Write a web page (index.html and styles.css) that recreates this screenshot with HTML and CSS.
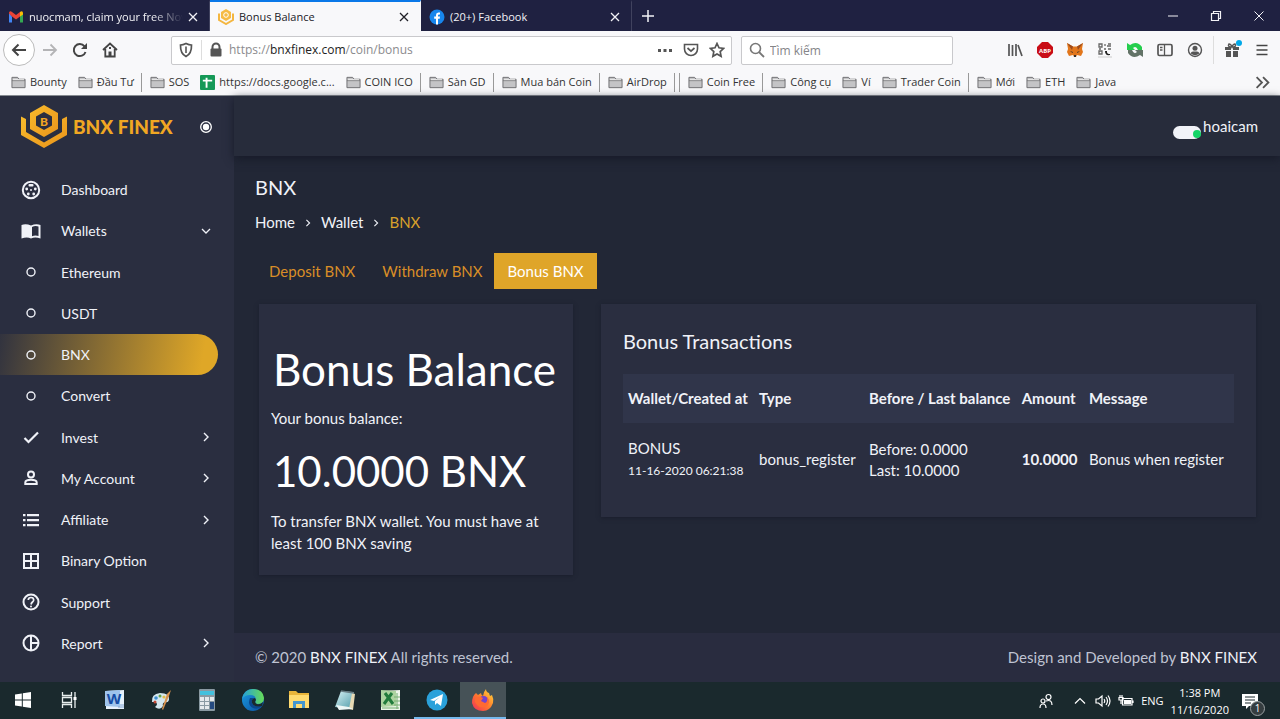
FILE: index.html
```html
<!DOCTYPE html>
<html lang="en">
<head>
<meta charset="utf-8">
<meta name="viewport" content="width=device-width, initial-scale=1">
<title>Bonus Balance</title>
<link rel="stylesheet" href="styles.css">
</head>
<body>
<svg class="defs" aria-hidden="true">
  <defs>
    <linearGradient id="gold" x1="0" y1="0" x2="1" y2="1"><stop offset="0" stop-color="#f8bb2c"/><stop offset="1" stop-color="#ea941b"/></linearGradient>
    <linearGradient id="edgeBlue" x1="0" y1="0" x2="1" y2="1"><stop offset="0" stop-color="#1b9de2"/><stop offset="1" stop-color="#0b4fa0"/></linearGradient>
    <linearGradient id="edgeGreen" x1="0" y1="0" x2="1" y2="0"><stop offset="0" stop-color="#239fdc"/><stop offset="1" stop-color="#68dc55"/></linearGradient>
    <linearGradient id="fox" x1="1" y1="0" x2="0" y2="1"><stop offset="0" stop-color="#ffe03b"/><stop offset=".5" stop-color="#ff7a2c"/><stop offset="1" stop-color="#f02c5d"/></linearGradient>
    <linearGradient id="pad" x1="0" y1="0" x2="1" y2="1"><stop offset="0" stop-color="#d9f3f5"/><stop offset="1" stop-color="#4d9aa8"/></linearGradient>
  </defs>
  <symbol id="folder" viewBox="0 0 16 14"><path d="M1 1.500V12.500H15V3.500H8.500L7 1.500Z" fill="#c4c4c6" stroke="#6d6d70"/><path d="M1 5H15" stroke="#77777a"/><path d="M2 4H14" stroke="#f1f1f1"/></symbol>
  <symbol id="close" viewBox="0 0 10 10"><path d="M1 1L9 9M9 1L1 9" fill="none" stroke="currentColor" stroke-width="1.300"/></symbol>
  <symbol id="right" viewBox="0 0 10 10"><path d="M3 1L7 5L3 9" fill="none" stroke="currentColor" stroke-width="1.400"/></symbol>
  <symbol id="down" viewBox="0 0 10 10"><path d="M1 3L5 7L9 3" fill="none" stroke="currentColor" stroke-width="1.300"/></symbol>
  <symbol id="ring" viewBox="0 0 20 20"><circle cx="10" cy="10" r="4" fill="none" stroke="currentColor" stroke-width="1.400"/></symbol>
</svg>

<header class="browser">
  <div class="tabs">
    <div class="tab">
      <svg class="fav" viewBox="0 0 16 16"><path d="M1 4V13.500H4V7.500Z" fill="#4285f4"/><path d="M15 4V13.500H12V7.500Z" fill="#34a853"/><path d="M1 4.500V3.500Q2 1.500 4 3L8 6L12 3V7.500L8 10.500L4 7.500Z" fill="#ea4335"/><path d="M12 3Q14 1.500 15 3.500V5.500L12 7.800Z" fill="#fbbc04"/></svg>
      <span class="tab-title fade">nuocmam, claim your free Nov</span>
      <button class="tab-close" aria-label="Close tab"><svg><use href="#close"/></svg></button>
    </div>
    <div class="tab active">
      <svg class="fav" viewBox="0 0 16 16"><path d="M8 0L13 3V9L8 12L3 9V3Z" fill="#f6bb45"/><path d="M1 4.500V11L8 15L15 11V4.500" fill="none" stroke="#f4b640" stroke-width="2"/><circle cx="8" cy="6" r="2.300" fill="none" stroke="#fff"/></svg>
      <span class="tab-title">Bonus Balance</span>
      <button class="tab-close" aria-label="Close tab"><svg><use href="#close"/></svg></button>
    </div>
    <div class="tab">
      <svg class="fav" viewBox="0 0 16 16"><circle cx="8" cy="8" r="7.500" fill="#1786ed"/><path d="M7 15.500V9.700H5.200V7.500H7V6Q7 3.500 9.300 3.500H11V5.500H10Q9 5.500 9 6.500V7.500H11L10.700 9.700H9V15.500Z" fill="#fff"/></svg>
      <span class="tab-title">(20+) Facebook</span>
      <button class="tab-close" aria-label="Close tab"><svg><use href="#close"/></svg></button>
    </div>
    <button class="new-tab" aria-label="New tab"><svg viewBox="0 0 14 14"><path d="M7 1V13M1 7H13" stroke="currentColor" stroke-width="1.500"/></svg></button>
    <div class="window-controls">
      <button aria-label="Minimize"><svg viewBox="0 0 12 12"><path d="M1 6H11" stroke="currentColor"/></svg></button>
      <button aria-label="Restore"><svg viewBox="0 0 12 12"><path d="M1.500 3.500H8.500V10.500H1.500ZM3.500 3V1.500H10.500V8.500H9" fill="none" stroke="currentColor" stroke-width="1.200"/></svg></button>
      <button aria-label="Close"><svg viewBox="0 0 12 12"><path d="M1.500 1.500L10.500 10.500M10.500 1.500L1.500 10.500" stroke="currentColor"/></svg></button>
    </div>
  </div>

  <div class="toolbar">
    <div class="nav-buttons">
      <button class="back" aria-label="Back"><svg viewBox="0 0 16 16"><path d="M15 8H2M7.500 2.500L2 8L7.500 13.500" fill="none" stroke="currentColor" stroke-width="2"/></svg></button>
      <button class="forward" aria-label="Forward"><svg viewBox="0 0 16 16"><path d="M1 8H14M8.500 2.500L14 8L8.500 13.500" fill="none" stroke="currentColor" stroke-width="1.800"/></svg></button>
      <button aria-label="Reload"><svg viewBox="0 0 16 16"><path d="M13.500 10A6 6 0 1 1 12.500 4.300" fill="none" stroke="currentColor" stroke-width="2"/><path d="M15 1V7H9Z" fill="currentColor"/></svg></button>
      <button aria-label="Home"><svg viewBox="0 0 16 16"><path d="M1 8L8 1.500L15 8M3.300 7V14.500H12.700V7" fill="none" stroke="currentColor" stroke-width="1.800"/><path d="M6.500 14V9.500H9.500V14ZM7 5H9V7H7Z" fill="currentColor"/></svg></button>
    </div>
    <div class="url">
      <svg viewBox="0 0 16 16"><path d="M8 1.500C6 2.500 4 3 2.500 3C2.300 9 4 12.500 8 14.500C12 12.500 13.700 9 13.500 3C12 3 10 2.500 8 1.500Z" fill="none" stroke="#555" stroke-width="1.700"/><path d="M8 4.500V11" stroke="#555" stroke-width="1.600"/></svg>
      <span class="divider"></span>
      <svg viewBox="0 0 16 16"><path d="M4.500 7V5A3.500 3.500 0 0 1 11.500 5V7" fill="none" stroke="#555" stroke-width="2"/><rect x="2.500" y="6.500" width="11" height="8" rx="1" fill="#555"/></svg>
      <a class="address" href="#">https://<b>bnxfinex.com</b>/coin/bonus</a>
      <svg viewBox="0 0 16 16"><path d="M1 7H4V10H1ZM6.500 7H9.500V10H6.500ZM12 7H15V10H12Z" fill="#555"/></svg>
      <svg class="pocket" viewBox="0 0 16 16"><path d="M1.500 2.500H14.500V7A6.500 6.500 0 0 1 1.500 7Z" fill="none" stroke="#555" stroke-width="1.600"/><path d="M4.500 6L8 9.200L11.500 6" fill="none" stroke="#555" stroke-width="1.700"/></svg>
      <svg viewBox="0 0 16 16"><path d="M8 1.500L10 5.800L14.700 6.400L11.200 9.600L12.100 14.300L8 12L3.900 14.300L4.800 9.600L1.300 6.400L6 5.800Z" fill="none" stroke="#555" stroke-width="1.700"/></svg>
    </div>
    <label class="search">
      <svg viewBox="0 0 16 16"><circle cx="6.500" cy="6.500" r="5" fill="none" stroke="#777" stroke-width="1.600"/><path d="M10 10L15 15" stroke="#777" stroke-width="1.800"/></svg>
      <input type="search" placeholder="Tìm kiếm" aria-label="Tìm kiếm">
    </label>
    <div class="extensions">
      <button aria-label="Library"><svg viewBox="0 0 16 16"><path d="M2 2V14M5.500 3V14M9 2V14M11 3L15 14" stroke="#555" stroke-width="1.700"/></svg></button>
      <button aria-label="Adblock Plus"><svg viewBox="0 0 16 16"><path d="M5 0H11L16 5V11L11 16H5L0 11V5Z" fill="#c90d16"/><text class="abp" x="8" y="10.500" text-anchor="middle">ABP</text></svg></button>
      <button aria-label="MetaMask"><svg viewBox="0 0 16 16"><path d="M0 1L6 4.500H10L16 1L15 7L16 10L14 14L10 13L9 15H7L6 13L2 14L0 10L1 7Z" fill="#e2761b"/><path d="M0 1L6 4.500L5 8Z M16 1L10 4.500L11 8Z" fill="#9b4a1c"/><path d="M3 9L6 10L5.500 11ZM13 9L10 10L10.500 11ZM7 13H9V15H7Z" fill="#333"/></svg></button>
      <button aria-label="QR code"><svg viewBox="0 0 16 16"><path d="M2 2H5V5H2ZM2 9H5V12H2ZM8 2V4M10 4H14M11 2H14M7 7H9M11 7H14M2 7H4" fill="none" stroke="#666" stroke-width="1.300"/><path d="M8 9H10V10Q10 12 13 12V13Q8 14 8 9Z" fill="#222"/><path d="M1 15H15" stroke="#ccc"/></svg></button>
      <button aria-label="Sync"><svg viewBox="0 0 16 16"><path d="M0 8V1L3 3Q10 -2 15 5V8H11Q9 3 6 6L8 8Z" fill="#25ce4e"/><path d="M16 8V15L13 13Q6 18 1 11V8H5Q7 13 10 10L8 8Z" fill="#637367"/></svg></button>
      <button aria-label="Sidebars"><svg viewBox="0 0 16 16"><rect x="1" y="2.500" width="14" height="11" rx="1.500" fill="none" stroke="#555" stroke-width="1.700"/><path d="M7.500 3V13M3 5.500H5.500M3 8H5.500" stroke="#555" stroke-width="1.300"/></svg></button>
      <button aria-label="Account"><svg viewBox="0 0 16 16"><circle cx="8" cy="8" r="6.500" fill="none" stroke="#555" stroke-width="1.400"/><circle cx="8" cy="6.300" r="2.500" fill="#555"/><path d="M3.700 11.500Q4 9.500 6 9.500H10Q12 9.500 12.300 11.500Q8 15 3.700 11.500" fill="#555"/></svg></button>
      <span class="divider"></span>
      <button class="gift" aria-label="What's new"><svg viewBox="0 0 16 16"><path d="M1 5H7V8H1ZM9 5H15V8H9ZM2 9H7V15H2ZM9 9H14V15H9Z" fill="#555"/><path d="M8 5Q3 5 5 2Q7 2 8 5Q9 2 11 2Q13 5 8 5" fill="none" stroke="#555" stroke-width="1.500"/></svg></button>
      <button aria-label="Menu"><svg viewBox="0 0 16 16"><path d="M2.500 3.500H13.500M2.500 8H13.500M2.500 12.500H13.500" stroke="#444" stroke-width="1.600"/></svg></button>
    </div>
  </div>

  <nav class="bookmarks" aria-label="Bookmarks">
    <a href="#"><svg><use href="#folder"/></svg>Bounty</a>
    <a href="#"><svg><use href="#folder"/></svg>Đầu Tư</a>
    <i></i>
    <a href="#"><svg><use href="#folder"/></svg>SOS</a>
    <a href="#" class="sheet"><svg viewBox="0 0 16 16"><rect width="16" height="16" rx="1" fill="#159957"/><path d="M7 3V13.500M3 6H13" stroke="#fff" stroke-width="2"/></svg>https://docs.google.c...</a>
    <a href="#"><svg><use href="#folder"/></svg>COIN ICO</a>
    <i></i>
    <a href="#"><svg><use href="#folder"/></svg>Sàn GD</a>
    <i></i>
    <a href="#"><svg><use href="#folder"/></svg>Mua bán Coin</a>
    <i></i>
    <a href="#"><svg><use href="#folder"/></svg>AirDrop</a>
    <i class="double"></i>
    <a href="#"><svg><use href="#folder"/></svg>Coin Free</a>
    <i></i>
    <a href="#"><svg><use href="#folder"/></svg>Công cụ</a>
    <a href="#"><svg><use href="#folder"/></svg>Ví</a>
    <a href="#"><svg><use href="#folder"/></svg>Trader Coin</a>
    <i></i>
    <a href="#"><svg><use href="#folder"/></svg>Mới</a>
    <a href="#"><svg><use href="#folder"/></svg>ETH</a>
    <a href="#"><svg><use href="#folder"/></svg>Java</a>
    <button class="more" aria-label="More bookmarks"><svg viewBox="0 0 14 14"><path d="M1.500 2L6.500 7L1.500 12M7.500 2L12.500 7L7.500 12" fill="none" stroke="#555" stroke-width="1.700"/></svg></button>
  </nav>
</header>

<div class="app">
  <aside class="sidebar">
    <div class="brand">
      <a class="logo" href="#">
        <svg viewBox="0 0 48 44"><path d="M24 0L38 8V24L24 32L10 24V8Z" fill="url(#gold)"/><path d="M24 7L32 11.500V20.500L24 25L16 20.500V11.500Z" fill="#2a2e40"/><text class="logo-b" x="24" y="20.500" text-anchor="middle">B</text><path d="M1 11.500L6 14V27L24 37.500L42 27V14L47 11.500V30L24 43L1 30Z" fill="url(#gold)"/></svg>
        <span>BNX FINEX</span>
      </a>
      <button class="pin" aria-label="Toggle menu"><svg viewBox="0 0 14 14"><circle cx="7" cy="7" r="5.300" fill="none" stroke="#fff" stroke-width="1.300"/><circle cx="7" cy="7" r="3.200" fill="#fff"/></svg></button>
    </div>
    <nav class="menu">
      <a href="#"><svg viewBox="0 0 20 20"><circle cx="10" cy="10" r="8.200" fill="none" stroke="currentColor" stroke-width="2"/><circle cx="5.700" cy="9" r="1.400"/><circle cx="14.300" cy="9" r="1.400"/><circle cx="10" cy="10" r="1"/><circle cx="7.300" cy="14" r="1.400"/><circle cx="12.700" cy="14" r="1.400"/><rect x="7.500" y="4" width="5" height="2.500" rx="1"/></svg><span>Dashboard</span></a>
      <a href="#"><svg viewBox="0 0 20 20"><path d="M0.500 4Q5 2.500 10 4.500Q15 2.500 19.500 4V17.500Q14 15.500 10 17.500Q6 15.500 0.500 17.500ZM11 6V15.300Q14 14 17.500 15V5.500Q14 4.500 11 6Z" fill-rule="evenodd"/></svg><span>Wallets</span><svg class="arrow"><use href="#down"/></svg></a>
      <a href="#"><svg><use href="#ring"/></svg><span>Ethereum</span></a>
      <a href="#"><svg><use href="#ring"/></svg><span>USDT</span></a>
      <a href="#" class="current"><svg><use href="#ring"/></svg><span>BNX</span></a>
      <a href="#"><svg><use href="#ring"/></svg><span>Convert</span></a>
      <a href="#"><svg viewBox="0 0 20 20"><path d="M3.500 11L7.500 15L17 5.500" fill="none" stroke="currentColor" stroke-width="2.200"/></svg><span>Invest</span><svg class="arrow"><use href="#right"/></svg></a>
      <a href="#"><svg viewBox="0 0 20 20"><circle cx="10" cy="6.500" r="3" fill="none" stroke="currentColor" stroke-width="2"/><path d="M4.300 16V14.500Q4.300 11.800 10 11.800Q15.700 11.800 15.700 14.500V16Z" fill="none" stroke="currentColor" stroke-width="2"/></svg><span>My Account</span><svg class="arrow"><use href="#right"/></svg></a>
      <a href="#"><svg viewBox="0 0 20 20"><path d="M2 4H4.500V6.300H2ZM6 4H18V6.300H6ZM2 9H4.500V11.300H2ZM6 9H18V11.300H6ZM2 14H4.500V16.300H2ZM6 14H18V16.300H6Z"/></svg><span>Affiliate</span><svg class="arrow"><use href="#right"/></svg></a>
      <a href="#"><svg viewBox="0 0 20 20"><path d="M3 3H17V17H3ZM10 3V17M3 10H17" fill="none" stroke="currentColor" stroke-width="2"/></svg><span>Binary Option</span></a>
      <a href="#"><svg viewBox="0 0 20 20"><circle cx="10" cy="10" r="7.500" fill="none" stroke="currentColor" stroke-width="2"/><path d="M7.300 8Q7.300 5.500 10 5.500T12.700 8Q12.700 9 11.500 10T10 12.500" fill="none" stroke="currentColor" stroke-width="1.700"/><circle cx="10" cy="14.500" r="1"/></svg><span>Support</span></a>
      <a href="#"><svg viewBox="0 0 20 20"><circle cx="10" cy="10" r="7.500" fill="none" stroke="currentColor" stroke-width="2"/><path d="M10 2V18M10 10H18" stroke="currentColor" stroke-width="2"/></svg><span>Report</span><svg class="arrow"><use href="#right"/></svg></a>
    </nav>
  </aside>

  <div class="page">
    <div class="topbar"><a class="user" href="#"><span class="avatar"></span>hoaicam</a></div>
    <main class="content">
      <h1>BNX</h1>
      <nav class="crumbs" aria-label="Breadcrumb"><a href="#">Home</a><svg><use href="#right"/></svg><a href="#">Wallet</a><svg><use href="#right"/></svg><span>BNX</span></nav>
      <nav class="pills" aria-label="BNX wallet"><a href="#">Deposit BNX</a><a href="#">Withdraw BNX</a><a href="#" class="on">Bonus BNX</a></nav>
      <div class="cards">
        <section class="card balance">
          <h2>Bonus Balance</h2>
          <p>Your bonus balance:</p>
          <p class="amount">10.0000 BNX</p>
          <p>To transfer BNX wallet. You must have at least 100 BNX saving</p>
        </section>
        <section class="card transactions">
          <h3>Bonus Transactions</h3>
          <table>
            <colgroup><col class="c-wallet"><col class="c-type"><col class="c-before"><col class="c-amount"><col></colgroup>
            <thead><tr><th>Wallet/Created at</th><th>Type</th><th>Before / Last balance</th><th>Amount</th><th>Message</th></tr></thead>
            <tbody><tr><td>BONUS<br><small>11-16-2020 06:21:38</small></td><td>bonus_register</td><td>Before: 0.0000<br>Last: 10.0000</td><td><strong>10.0000</strong></td><td>Bonus when register</td></tr></tbody>
          </table>
        </section>
      </div>
    </main>
    <footer class="footer"><span>© 2020 <a href="#">BNX FINEX</a> All rights reserved.</span><span>Design and Developed by <a href="#">BNX FINEX</a></span></footer>
  </div>
</div>

<div class="taskbar">
  <div class="apps">
    <button aria-label="Start"><svg class="small" viewBox="0 0 16 16"><path d="M0 2.500L6.800 1.500V7.500H0ZM7.800 1.300L16 0V7.500H7.800ZM0 8.500H6.800V14.500L0 13.500ZM7.800 8.500H16V16L7.800 14.700Z" fill="#fff"/></svg></button>
    <button aria-label="Task View"><svg class="small" viewBox="0 0 16 16"><path d="M1.500 0V3.500H10.500V0M1.500 16V12.500H10.500V16M1.500 5.500H10.500V10.500H1.500ZM14 0V16" fill="none" stroke="#e8eeee" stroke-width="1.300"/><path d="M12.500 5H15.500V8H12.500Z" fill="#fff"/></svg></button>
    <button aria-label="Word"><svg viewBox="0 0 22 22"><path d="M2 2L20 1V20H2Z" fill="#e7f1fb"/><path d="M1 2L16 1V18L1 17Z" fill="#9fc4ec"/><text class="word" x="10" y="15" text-anchor="middle">W</text><path d="M16 16H20M14 18H20" stroke="#84a5d0"/></svg></button>
    <button aria-label="Paint"><svg viewBox="0 0 22 22"><path d="M2 13Q1 5 10 4Q20 4 19 11Q18 14 15 13Q12 14 13 17Q10 22 5 18Q9 15 5 13Z" fill="#d5e7ef"/><circle cx="6" cy="9" r="1.800" fill="#3e8ed0"/><circle cx="10" cy="7" r="1.500" fill="#61a34b"/><circle cx="5" cy="13" r="1.500" fill="#c44836"/><circle cx="14" cy="8" r="1.600" fill="#e2bd49"/><path d="M12 20L17 5L21 1L19 7L13 21Z" fill="#d7914e"/></svg></button>
    <button aria-label="Calculator"><svg viewBox="0 0 22 22"><rect x="3" width="16" height="22" rx="1" fill="#8999a2"/><rect x="4" y="2" width="14" height="4" fill="#43c0dd"/><path d="M4 8H8V12H4ZM9 8H13V12H9ZM14 8H18V12H14ZM4 13H8V16H4ZM9 13H13V16H9ZM4 17H8V20H4ZM9 17H13V20H9Z" fill="#e5e9ec"/><path d="M14 13H18V20H14Z" fill="#254a80"/></svg></button>
    <button aria-label="Edge"><svg viewBox="0 0 22 22"><circle cx="11" cy="11" r="11" fill="url(#edgeBlue)"/><path d="M0 10Q2 0 11 0Q21 0 22 9Q22 15 15 15Q12 14 14 11Q14 6 8 6Q3 6 0 10Z" fill="url(#edgeGreen)"/><path d="M8 9Q5 16 11 19Q16 21 20 17Q12 19 10 14Q9 11 12 9Z" fill="#0b478d"/><path d="M14 11Q12 14 15 15Q18 16 21 13L20 17Q12 19 10 14Q9 10 13 9Z" fill="#1a292d"/></svg></button>
    <button aria-label="File Explorer"><svg viewBox="0 0 22 22"><path d="M1 2H8L10 4H21V19H1Z" fill="#e9b53a"/><path d="M1 6H21V19H1Z" fill="#ffdb70"/><path d="M5 19V12H17V19H14V15H8V19Z" fill="#4496ce"/></svg></button>
    <button aria-label="Notepad"><svg viewBox="0 0 22 22"><path d="M7 2L20 3L18 20L1 18Z" fill="url(#pad)"/><path d="M18 4L21 5L19 21L15 20Z" fill="#e6d9b3"/><path d="M2 16L15 18L19 20L5 21Z" fill="#edf7f6"/><path d="M7 2L20 4" stroke="#687b82" stroke-width="1.500"/></svg></button>
    <button aria-label="Excel"><svg viewBox="0 0 22 22"><path d="M1 2L20 1V21H1Z" fill="#edf5e9"/><path d="M1 1L16 2V17L1 18Z" fill="#add3a0"/><path d="M5 4L13 15M12 4L4 15" stroke="#227b3c" stroke-width="3"/><path d="M14 8H20M14 12H20M14 16H20M17 4V20M2 19H19" stroke="#75ae70"/></svg></button>
    <button class="running" aria-label="Telegram"><svg viewBox="0 0 22 22"><circle cx="11" cy="11" r="10.500" fill="#2aa1da"/><path d="M4 11L17 5L15 17L11 14L9 16V12L14 8L8 12Z" fill="#fff"/></svg></button>
    <button class="running focused" aria-label="Firefox"><svg viewBox="0 0 22 22"><path d="M4 4L6 6L9 4Q9 6 11 7Q12 2 14 0Q14 3 17 4L18 7L20 6Q22 10 21 14Q18 22 11 22Q2 22 0 14Q0 7 4 4Z" fill="url(#fox)"/><circle cx="11.500" cy="12" r="5" fill="#7542cb"/><path d="M3 10Q6 6 11 9L9 12L13 14Q16 13 15 8Q19 13 15 17Q7 21 3 13Z" fill="#ff6a32"/></svg></button>
  </div>
  <div class="tray">
    <svg viewBox="0 0 16 16"><circle cx="10.500" cy="4" r="2.500"/><circle cx="5" cy="8" r="2"/><path d="M2 15Q2 11 5 11Q8 11 8 15M8 8Q14 6 14 12"/></svg>
    <svg class="chevron" viewBox="0 0 16 16"><path d="M3 10.500L8 5.500L13 10.500"/></svg>
    <svg viewBox="0 0 16 16"><path d="M1 6H3.500L7 3V13L3.500 10H1ZM9 6Q10.500 8 9 10M11 4Q14 8 11 12M13 2.500Q17 8 13 13.500"/></svg>
    <svg viewBox="0 0 16 16"><path d="M4.500 5.500H14V12H4.500ZM15 7.500V10M2 2V5M4 2V5M1 4.500H5V7H1ZM3 7V11"/><path d="M6.500 7.500H12.500V10.500H6.500Z" fill="#fff"/></svg>
    <span class="lang">ENG</span>
    <time datetime="2020-11-16T13:38">1:38 PM<br>11/16/2020</time>
    <button class="notice" aria-label="Notifications"><svg viewBox="0 0 16 16"><path d="M0 1H16V13H7L4 16V13H0Z" fill="#fff" stroke="none"/><path d="M3 4H13M3 7H13M3 10H9" stroke="#1a292d"/></svg><span>1</span></button>
  </div>
</div>
</body>
</html>
```

FILE: styles.css
```css
* { box-sizing: border-box; }
html, body { height: 100%; }
body {
  margin: 0;
  display: flex;
  flex-direction: column;
  background: #222736;
  color: #f0f2f8;
  font: 15px/21px Lato, "Noto Sans", sans-serif;
}
a { color: inherit; text-decoration: none; }
button { display: flex; align-items: center; justify-content: center; padding: 0; border: 0; background: none; color: inherit; font: inherit; }
svg { display: block; flex: none; width: 16px; height: 16px; }
.defs { position: absolute; width: 0; height: 0; }

/* Browser window */
.browser { flex: none; font: 11px/16px "Open Sans", "Noto Sans", sans-serif; color: #333; border-bottom: 1px solid #868b91; }
.tabs { display: flex; height: 31px; background: #1f2141; color: #f2f2f6; }
.tab { display: flex; align-items: center; width: 211px; padding: 0 11px 0 8px; gap: 5px; border-right: 1px solid #40425e; border-top: 2px solid transparent; }
.tab:first-child { width: 210px; }
.tab.active { background: #f8f8fa; color: #202027; border-top-color: #0a78e8; border-right-color: #f8f8fa; }
.tab-title { flex: 1; min-width: 0; white-space: nowrap; }
.fade { -webkit-mask-image: linear-gradient(90deg, #000 80%, transparent); mask-image: linear-gradient(90deg, #000 80%, transparent); }
.tab-close svg { width: 10px; height: 10px; }
.new-tab { width: 32px; }
.new-tab svg { width: 14px; height: 14px; }
.window-controls { display: flex; margin-left: auto; }
.window-controls button { width: 43px; }
.window-controls svg { width: 12px; height: 12px; }

.toolbar { display: flex; align-items: center; height: 38px; background: #f8f8fa; color: #444; }
.nav-buttons { display: flex; align-items: center; flex: none; gap: 14px; width: 171px; padding-left: 3px; }
.nav-buttons .back { width: 32px; height: 32px; border: 1px solid #bbb; border-radius: 50%; background: #fff; }
.nav-buttons .forward { margin-left: -7px; color: #b4b4b6; }
.url, .search { display: flex; align-items: center; height: 29px; background: #fff; border: 1px solid #c9c9cc; border-radius: 2px; }
.url { flex: 11; min-width: 0; padding: 0 6px; gap: 10px; }
.url .divider { width: 1px; height: 20px; margin: 0 -4px 0 -3px; background: #ddd; }
.address { flex: 1; min-width: 0; margin-left: -5px; overflow: hidden; white-space: nowrap; font-size: 12px; color: #8b8b8e; }
.address b { font-weight: 400; color: #222; }
.search { flex: 4; min-width: 0; margin-left: 9px; padding: 0 7px; gap: 5px; }
.url { flex: 574; }
.search { flex: 206; }
.search input { flex: 1; min-width: 0; padding: 0; border: 0; outline: 0; background: none; font: 12px "Open Sans", sans-serif; }
.search input::placeholder { color: #858588; opacity: 1; }
.extensions { display: flex; align-items: center; gap: 14px; margin-left: 54px; padding-right: 10px; }
.extensions .divider { width: 1px; height: 28px; margin: 0 -4px; background: #ddd; }
.abp { font: bold 6px "Open Sans", sans-serif; fill: #fff; }
.gift { position: relative; }
.gift::after { content: ""; position: absolute; top: -2px; right: -2px; width: 6px; height: 6px; border-radius: 50%; background: #00a8e8; }

.bookmarks { display: flex; align-items: center; height: 26px; padding: 0 10px 0 11px; background: #f8f8fa; white-space: nowrap; }
.bookmarks a { display: flex; align-items: center; gap: 4px; margin-right: 11px; }
.bookmarks svg { width: 15px; height: 15px; }
.bookmarks i { width: 1px; height: 19px; margin: 0 8px 0 -4px; background: #999; }
.bookmarks i.double { width: 6px; border: solid #999; border-width: 0 1px; background: none; }
.bookmarks .more { margin-left: auto; }

/* Dashboard */
.app { flex: 1; min-height: 0; display: flex; }
.sidebar { display: flex; flex-direction: column; flex: none; width: 234px; background: #2a2e40; }
.brand { display: flex; align-items: center; height: 62px; padding: 0 21px 0 20px; }
.logo { display: flex; align-items: center; flex: 1; gap: 5px; color: #f0a723; font: 900 19px/24px Lato, sans-serif; white-space: nowrap; }
.logo svg { width: 48px; height: 44px; }
.logo-b { font: 900 12px Lato, sans-serif; fill: #f3a522; }
.pin svg { width: 14px; height: 14px; }
.menu { flex: 1; display: flex; flex-direction: column; padding: 11px 16px 18px 0; font-size: 14px; }
.menu a { flex: 1; display: flex; align-items: center; padding: 0 7px 0 21px; gap: 20px; }
.menu span { flex: 1; }
.menu svg { width: 20px; height: 20px; fill: currentColor; }
.menu .arrow { width: 10px; height: 10px; }
.menu .current { background: linear-gradient(100deg, transparent -4%, #dfa727 92%); border-radius: 0 21px 21px 0; }

.page { flex: 1; min-width: 0; display: flex; flex-direction: column; }
.topbar { display: flex; justify-content: flex-end; align-items: center; flex: none; height: 60px; padding: 0 22px; background: #272c3b; box-shadow: 0 3px 9px #171b29; }
.user { display: flex; align-items: center; gap: 2px; }
.avatar { position: relative; width: 28px; height: 13px; margin-top: 13px; border-radius: 7px; background: #f1f3f8; }
.avatar::after { content: ""; position: absolute; right: 0; bottom: 1px; width: 8px; height: 8px; border-radius: 50%; background: #13d567; }
.content { flex: 1; padding: 19px 24px 20px 21px; }
h1, h2, h3, p { margin: 0; font-weight: 400; }
h1 { font-size: 20px; line-height: 24px; }
.crumbs { display: flex; align-items: center; gap: 9px; margin-top: 13px; }
.crumbs svg { width: 8px; height: 8px; }
.crumbs span { color: #d9a12b; }
.pills { display: flex; margin-top: 20px; }
.pills a { padding: 7px 13px 7px 14px; line-height: 22px; color: #d98e27; }
.pills .on { margin-left: -2px; background: #dfa529; color: #fff; }
.cards { display: grid; grid-template-columns: minmax(0, 314fr) minmax(0, 655fr); gap: 28px; align-items: start; margin: 15px 0 0 4px; }
.card { background: #2a2e40; box-shadow: 0 1px 4px #1a1e2c; }
.balance { padding: 38px 12px 21px; line-height: 22px; }
.balance h2, .balance .amount { padding-left: 2px; font-size: 44px; line-height: 54px; color: #fff; white-space: nowrap; }
.balance h2 { margin-bottom: 11px; }
.balance .amount { margin: 15px 0 12px; font-size: 42px; }
.transactions { padding: 25px 22px 22px; }
h3 { margin-bottom: 21px; font-size: 20px; line-height: 24px; }
table { width: 100%; border-collapse: collapse; table-layout: fixed; white-space: nowrap; }
th, td { padding: 14px 5px; text-align: left; font-weight: 400; }
td { padding-top: 15px; }
th { font-weight: 700; background: #30354a; }
small { font-size: 12px; }
.c-wallet { width: 131px; }
.c-type { width: 18%; }
.c-before { width: 25%; }
.c-amount { width: 11%; }
.footer { display: flex; align-items: center; justify-content: space-between; flex: none; height: 49px; padding: 0 23px 0 21px; background: #292c3f; color: #bfc3d2; }
.footer a { color: #f0f2f8; }

/* Desktop taskbar */
.taskbar { display: flex; justify-content: space-between; flex: none; height: 37px; background: #1a292d; font: 12px/17px "Open Sans", "Noto Sans", sans-serif; color: #fff; }
.apps { display: flex; }
.apps button { width: 46px; border-bottom: 2px solid transparent; }
.apps svg { width: 22px; height: 22px; }
.apps .small { width: 16px; height: 16px; }
.apps .running { border-bottom-color: #76b9ed; }
.apps .focused { background: #465257; }
.word { font: bold 15px "Open Sans", sans-serif; fill: #164da5; }
.tray { display: flex; align-items: center; gap: 7px; padding-right: 22px; }
.tray svg { fill: none; stroke: #fff; stroke-width: 1.200; }
.tray .chevron { margin-left: 11px; }
.tray .lang { font-size: 11px; }
.tray time { text-align: center; font-size: 11px; }
.notice { position: relative; margin-left: 6px; }
.notice span { position: absolute; right: -7px; bottom: -7px; width: 15px; height: 15px; border: 1px solid #9aa0a2; border-radius: 50%; background: #353d40; font-size: 10px; line-height: 13px; }
```
